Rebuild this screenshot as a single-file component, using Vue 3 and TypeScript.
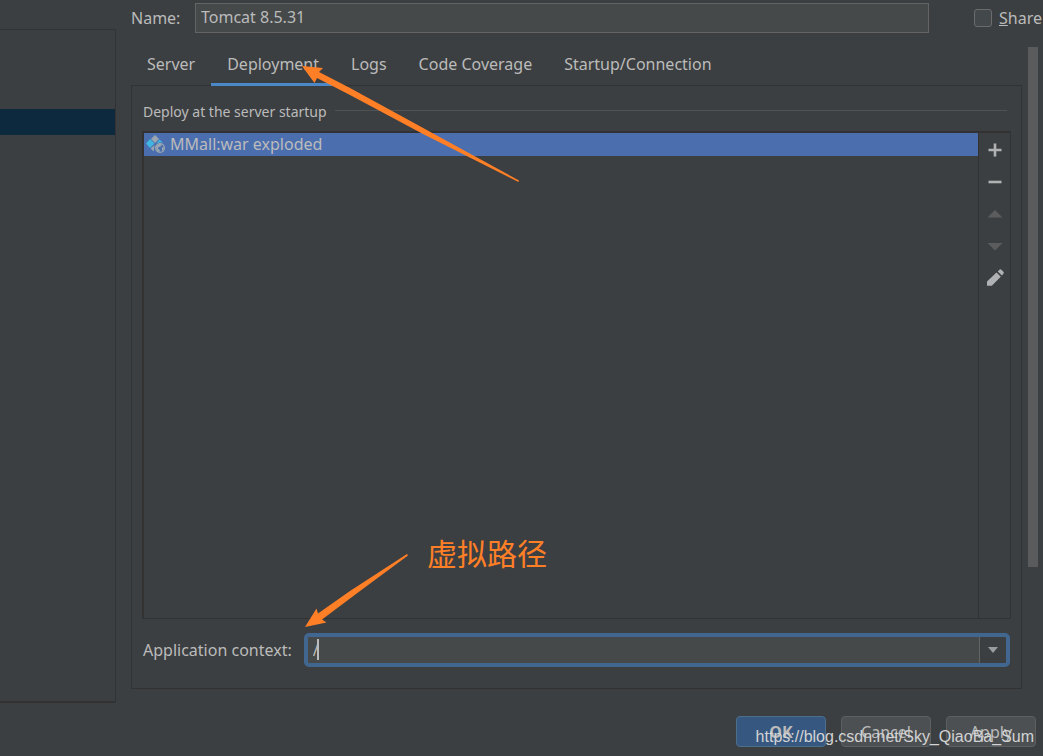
<script setup lang="ts">
import { ref } from 'vue'

const name = ref('Tomcat 8.5.31')
const shared = ref(false)
const context = ref('/')
const tabs = ['Server', 'Deployment', 'Logs', 'Code Coverage', 'Startup/Connection']
const activeTab = ref('Deployment')
const artifacts = ['MMall:war exploded']
</script>

<template>
  <div class="dialog">
    <div class="body">
      <aside class="tree"><div class="tree-selected"></div></aside>

      <main class="main">
        <div class="name-row">
          <label class="name-label" for="cfg-name">Name:</label>
          <input id="cfg-name" v-model="name" class="field" type="text" />
          <label class="share"><input v-model="shared" type="checkbox" /><span><u>S</u>hare</span></label>
        </div>

        <div class="scroll-area">
          <div class="config">
            <div class="tabs" role="tablist">
              <button
                v-for="tab in tabs"
                :key="tab"
                class="tab"
                :class="{ active: tab === activeTab }"
                role="tab"
                :aria-selected="tab === activeTab"
                @click="activeTab = tab"
              >{{ tab }}</button>
            </div>

            <section class="panel">
              <h2 class="group-title"><span>Deploy at the server startup</span></h2>
              <div class="deploy">
                <ul class="artifacts">
                  <li v-for="item in artifacts" :key="item" class="artifact">
                    <svg width="20" height="20" viewBox="0 0 20 20" aria-hidden="true">
                      <path d="M9 1l4 4-4 4-4-4z" fill="#9aa7b0" />
                      <path d="M4 5l4.500 4.500-4.500 4.500-4-4.500z" fill="#40b6e0" />
                      <path d="M13.500 5.500l3.500 3.300a7 7 0 0 0-7 1z" fill="#40b6e0" />
                      <path d="M8.500 11l-.8 6.500-3-3z" fill="#9aa7b0" />
                      <circle cx="14" cy="14" r="4.400" fill="none" stroke="#9aa7b0" stroke-width="1.200" />
                      <path d="M10 11.800l3-2.200 3 1-1.500 2-2 .4-.5 1.800 2 1.500-1 2.200-2.500-2.500z" fill="#9aa7b0" />
                      <path d="M16 13.500l2-.5-.5 3-1.500 1z" fill="#9aa7b0" />
                    </svg>
                    <span>{{ item }}</span>
                  </li>
                </ul>
                <div class="tools">
                  <button aria-label="Add">
                    <svg width="20" height="20" viewBox="0 0 20 20"><path d="M8.700 3.500h2.600v5.200h5.200v2.600h-5.200v5.200H8.700v-5.200H3.500V8.700h5.200z" fill="#afb1b3" /></svg>
                  </button>
                  <button aria-label="Remove">
                    <svg width="20" height="20" viewBox="0 0 20 20"><path d="M3.500 8.700h13v2.600h-13z" fill="#afb1b3" /></svg>
                  </button>
                  <button aria-label="Move up" disabled>
                    <svg width="20" height="20" viewBox="0 0 20 20"><path d="M2.500 13.500l7.500-7.500 7.500 7.500z" fill="#5b5c5d" /></svg>
                  </button>
                  <button aria-label="Move down" disabled>
                    <svg width="20" height="20" viewBox="0 0 20 20"><path d="M2.500 7h15l-7.500 7.500z" fill="#5b5c5d" /></svg>
                  </button>
                  <button aria-label="Edit">
                    <svg width="20" height="20" viewBox="0 0 20 20">
                      <path d="M11.500 4.500l4.300 4.300-9 9H2v-4.300zM12.800 3.400l1.600-1.600a1.500 1.500 0 0 1 2 0l2 2a1.500 1.500 0 0 1 0 2l-1.500 1.600z" fill="#afb1b3" />
                    </svg>
                  </button>
                </div>
              </div>
              <div class="context-row">
                <label for="app-context">Application context:</label>
                <div class="combo">
                  <input id="app-context" v-model="context" type="text" />
                  <i class="caret"></i>
                  <button aria-label="Show contexts">
                    <svg width="12" height="8" viewBox="0 0 12 8"><path d="M1 1h10L6 7z" fill="#9a9da0" /></svg>
                  </button>
                </div>
              </div>
            </section>
          </div>
          <div class="track"><div class="thumb"></div></div>
        </div>
      </main>
    </div>

    <footer class="actions">
      <button class="btn primary">OK</button>
      <button class="btn">Cancel</button>
      <button class="btn">Apply</button>
    </footer>

    <svg class="arrows" width="540" height="640" viewBox="0 0 540 640" fill="#ff7f27" aria-hidden="true">
      <path d="M302 66L323 68L319 72L350 88L425 129L519 180.500L518.500 182L423 134L350 95L317 78L314.500 83z" />
      <path d="M305 627L316.500 608.500L318 613.500L350 591L407 554L408 555.500L360 591L322 619.500L326.500 622.500z" />
    </svg>
    <div class="note">虚拟路径</div>
    <div class="watermark">https://blog.csdn.net/Sky_QiaoBa_Sum</div>
  </div>
</template>

<style>
body {
  background: #3c3f41;
}
</style>

<style scoped>
* {
  box-sizing: border-box;
}
.dialog {
  position: relative;
  display: flex;
  flex-direction: column;
  min-height: 100vh;
  overflow: hidden;
  background: #3c3f41;
  color: #bbbbbb;
  font: 16px/22px "Noto Sans", "Noto Sans CJK SC", sans-serif;
}
button,
input {
  margin: 0;
  font: inherit;
  color: inherit;
  outline: none;
}
button {
  display: flex;
  align-items: center;
  justify-content: center;
  padding: 0;
  border: 0;
  background: none;
}
.body {
  flex: 1;
  display: flex;
  gap: 15px;
}
.tree {
  width: 116px;
  flex: none;
  margin-top: 29px;
  padding-top: 79px;
  border: solid #323232;
  border-width: 1px 1px 2px 0;
}
.tree-selected {
  height: 26px;
  background: #0d293e;
}
.main {
  flex: 1;
  min-width: 0;
  display: flex;
  flex-direction: column;
  padding: 3px 5px 14px 0;
}
.name-row {
  display: flex;
  align-items: center;
  margin-bottom: 14px;
}
.name-label {
  width: 64px;
}
.field {
  flex: 1;
  min-width: 0;
  height: 30px;
  padding: 0 5px 2px;
  border: 1px solid #646464;
  background: #45494a;
}
.share {
  display: flex;
  align-items: center;
  gap: 7px;
  width: 109px;
  padding-left: 45px;
  white-space: nowrap;
}
.share input {
  appearance: none;
  flex: none;
  width: 18px;
  height: 18px;
  border: 1px solid #6b6b6b;
  border-radius: 3px;
  background: #43494a;
}
.scroll-area {
  flex: 1;
  display: flex;
  gap: 6px;
}
.config {
  flex: 1;
  min-width: 0;
  display: flex;
  flex-direction: column;
}
.track {
  width: 10px;
}
.thumb {
  height: 81%;
  background: #5a5b5d;
}
.tabs {
  display: flex;
  height: 38px;
}
.tab {
  position: relative;
  padding: 0 16px 4px;
  white-space: nowrap;
}
.tab.active::after {
  content: "";
  position: absolute;
  inset: auto 0 -1px;
  height: 3px;
  background: #4a88c7;
}
.panel {
  flex: 1;
  display: flex;
  flex-direction: column;
  padding: 16px 10px 21px 10px;
  border: 1px solid #323232;
}
.group-title {
  display: flex;
  align-items: center;
  gap: 8px;
  margin: 0 4px 9px 1px;
  font-size: 14px;
  line-height: 20px;
  font-weight: 400;
}
.group-title::after {
  content: "";
  flex: 1;
  height: 1px;
  margin-bottom: 4px;
  background: #505354;
}
.deploy {
  flex: 1;
  display: flex;
  border: 1px solid #323232;
  border-width: 2px 1px 1px 2px;
}
.artifacts {
  flex: 1;
  margin: 0;
  padding: 0;
  list-style: none;
}
.artifact {
  display: flex;
  align-items: center;
  gap: 4px;
  height: 23px;
  padding: 0 2px 1px;
  background: #4b6eaf;
}
.tools {
  width: 32px;
  padding-top: 1px;
  border-left: 1px solid #323232;
}
.tools button {
  width: 100%;
  height: 32px;
}
.context-row {
  display: flex;
  align-items: center;
  gap: 12px;
  margin: 14px 1px 0;
}
.combo {
  position: relative;
  flex: 1;
  display: flex;
  height: 34px;
  border: 4px solid #41668f;
  border-radius: 5px;
}
.combo input {
  flex: 1;
  min-width: 0;
  padding: 0 5px;
  border: 0;
  background: #45494a;
}
.combo button {
  width: 27px;
  border-left: 1px solid #646464;
}
.caret {
  position: absolute;
  left: 9px;
  top: 2px;
  width: 2px;
  height: 21px;
  background: #bbbbbb;
}
.actions {
  display: flex;
  justify-content: flex-end;
  gap: 15px;
  padding: 13px 7px 9px;
}
.btn {
  width: 90px;
  height: 31px;
  border: 1px solid #5e6060;
  border-radius: 4px;
  background: #4c5052;
}
.btn.primary {
  border-color: #4c708c;
  background: #365880;
  font-weight: 700;
}
.arrows {
  position: absolute;
  left: 0;
  top: 0;
  pointer-events: none;
}
.note {
  position: absolute;
  left: 427px;
  top: 532px;
  color: #ff7f27;
  font: 30px/40px "Noto Sans CJK SC", sans-serif;
}
.watermark {
  position: absolute;
  right: 9px;
  bottom: 9px;
  color: #d2d3d4;
  font: 16px/20px "Liberation Sans", Arial, sans-serif;
  pointer-events: none;
}
</style>
